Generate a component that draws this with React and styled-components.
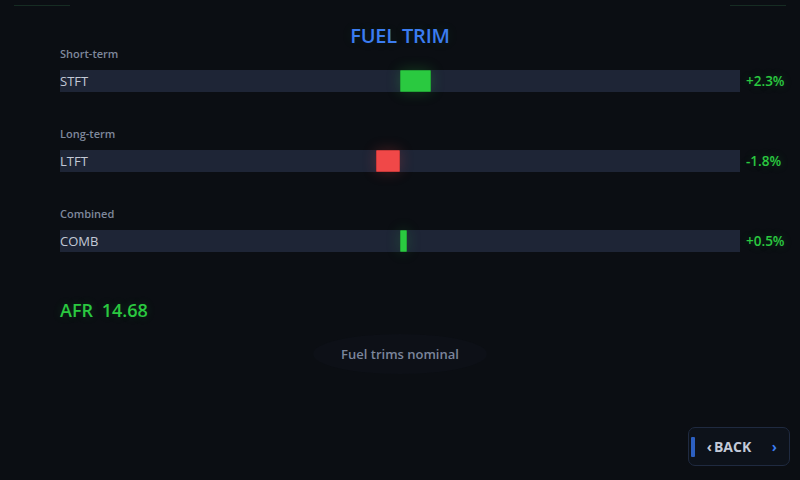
import React from "react";
import styled, { createGlobalStyle } from "styled-components";

const Global = createGlobalStyle`
  html, body { margin: 0; padding: 0; background: #0b0e13; }
  body { font-family: "Open Sans", "Noto Sans", sans-serif; }
  * { box-sizing: border-box; }
`;

const Screen = styled.div`
  position: relative;
  width: 800px;
  height: 480px;
  overflow: hidden;
  background: #0b0e13;
  display: flex;
  flex-direction: column;
  padding: 24px 10px 14px 60px;
`;

const Corner = styled.div`
  position: absolute;
  top: 5px;
  ${(p) => (p.$right ? "right: 14px;" : "left: 14px;")}
  width: 56px;
  height: 1px;
  background: rgba(40, 90, 60, 0.4);
`;

const Title = styled.h1`
  margin: 0 50px 0 0;
  align-self: center;
  font-size: 20px;
  line-height: 24px;
  font-weight: 600;
  color: #3b7cf0;
  letter-spacing: -0.2px;
  text-shadow: 0 0 12px rgba(40, 200, 80, 0.12);
`;

const Rows = styled.div`
  display: flex;
  flex-direction: column;
  gap: 35px;
  margin-top: -1px;
`;

const Row = styled.div`
  display: flex;
  flex-direction: column;
  gap: 9px;
`;

const Label = styled.div`
  font-size: 11px;
  line-height: 14px;
  font-weight: 600;
  color: #7f889c;
`;

const BarLine = styled.div`
  display: flex;
  align-items: center;
  gap: 6px;
`;

const Bar = styled.div`
  position: relative;
  width: 680px;
  height: 22px;
  background: #1e2536;
  display: flex;
  align-items: center;
`;

const BarName = styled.span`
  position: relative;
  z-index: 1;
  font-size: 13px;
  font-weight: 500;
  color: #c3c9d6;
`;

const Marker = styled.div`
  position: absolute;
  top: 0;
  bottom: 0;
  border-radius: 1px;
  border: 1px solid ${(p) => (p.$neg ? "#c83a3a" : "#22a436")};
  background: ${(p) => (p.$neg ? "#f04848" : "#2ac940")};
  box-shadow: 0 0 14px ${(p) => (p.$neg ? "rgba(240,72,72,0.25)" : "rgba(42,201,64,0.25)")};
`;

const Value = styled.span`
  font-size: 13.5px;
  font-weight: 600;
  color: #2ac940;
  text-shadow: 0 0 8px rgba(42, 201, 64, 0.25);
`;

const Afr = styled.div`
  margin-top: 46px;
  font-size: 18px;
  line-height: 24px;
  font-weight: 600;
  color: #2ac940;
  word-spacing: 4px;
  text-shadow: 0 0 10px rgba(42, 201, 64, 0.2);
`;

const Status = styled.div`
  align-self: center;
  margin: 12px 50px 0 0;
  padding: 11px 28px;
  border-radius: 50%;
  background: #0d1017;
  font-size: 13px;
  line-height: 18px;
  font-weight: 600;
  color: #7b859b;
`;

const BackButton = styled.button`
  margin-top: auto;
  align-self: flex-end;
  width: 102px;
  height: 39px;
  position: relative;
  display: flex;
  align-items: center;
  justify-content: center;
  gap: 2px;
  background: #0d121a;
  border: 1px solid #1f2a40;
  border-radius: 7px;
  font-family: "Open Sans", "Noto Sans", sans-serif;
  font-size: 14px;
  font-weight: 700;
  color: #c3cad8;
  cursor: pointer;
  padding: 0 0 0 2px;
`;

const Accent = styled.span`
  position: absolute;
  left: 2px;
  top: 9px;
  width: 4px;
  height: 20px;
  background: #2c5fc0;
  border-radius: 1px;
`;

const Chev = styled.span`
  font-size: 14px;
  color: ${(p) => p.$c};
  ${(p) => (p.$end ? "position: absolute; right: 12px;" : "")}
`;

const BackText = styled.span`
  margin-right: 22px;
`;

const trims = [
  { label: "Short-term", name: "STFT", value: 2.3 },
  { label: "Long-term", name: "LTFT", value: -1.8 },
  { label: "Combined", name: "COMB", value: 0.5 },
];

const fmt = (v) => `${v >= 0 ? "+" : ""}${v.toFixed(1)}%`;

export default function App() {
  const scale = 13.6;
  return (
    <>
      <Global />
      <Screen>
        <Corner />
        <Corner $right />
        <Title>FUEL TRIM</Title>
        <Rows>
          {trims.map((t) => {
            const w = Math.abs(t.value) * scale;
            const left = t.value >= 0 ? 340 : 340 - w;
            return (
              <Row key={t.name}>
                <Label>{t.label}</Label>
                <BarLine>
                  <Bar>
                    <BarName>{t.name}</BarName>
                    <Marker $neg={t.value < 0} style={{ left, width: w }} />
                  </Bar>
                  <Value>{fmt(t.value)}</Value>
                </BarLine>
              </Row>
            );
          })}
        </Rows>
        <Afr>AFR 14.68</Afr>
        <Status>Fuel trims nominal</Status>
        <BackButton>
          <Accent />
          <Chev $c="#c3cad8">‹</Chev>
          <BackText>BACK</BackText>
          <Chev $c="#3b7cf0" $end>›</Chev>
        </BackButton>
      </Screen>
    </>
  );
}
